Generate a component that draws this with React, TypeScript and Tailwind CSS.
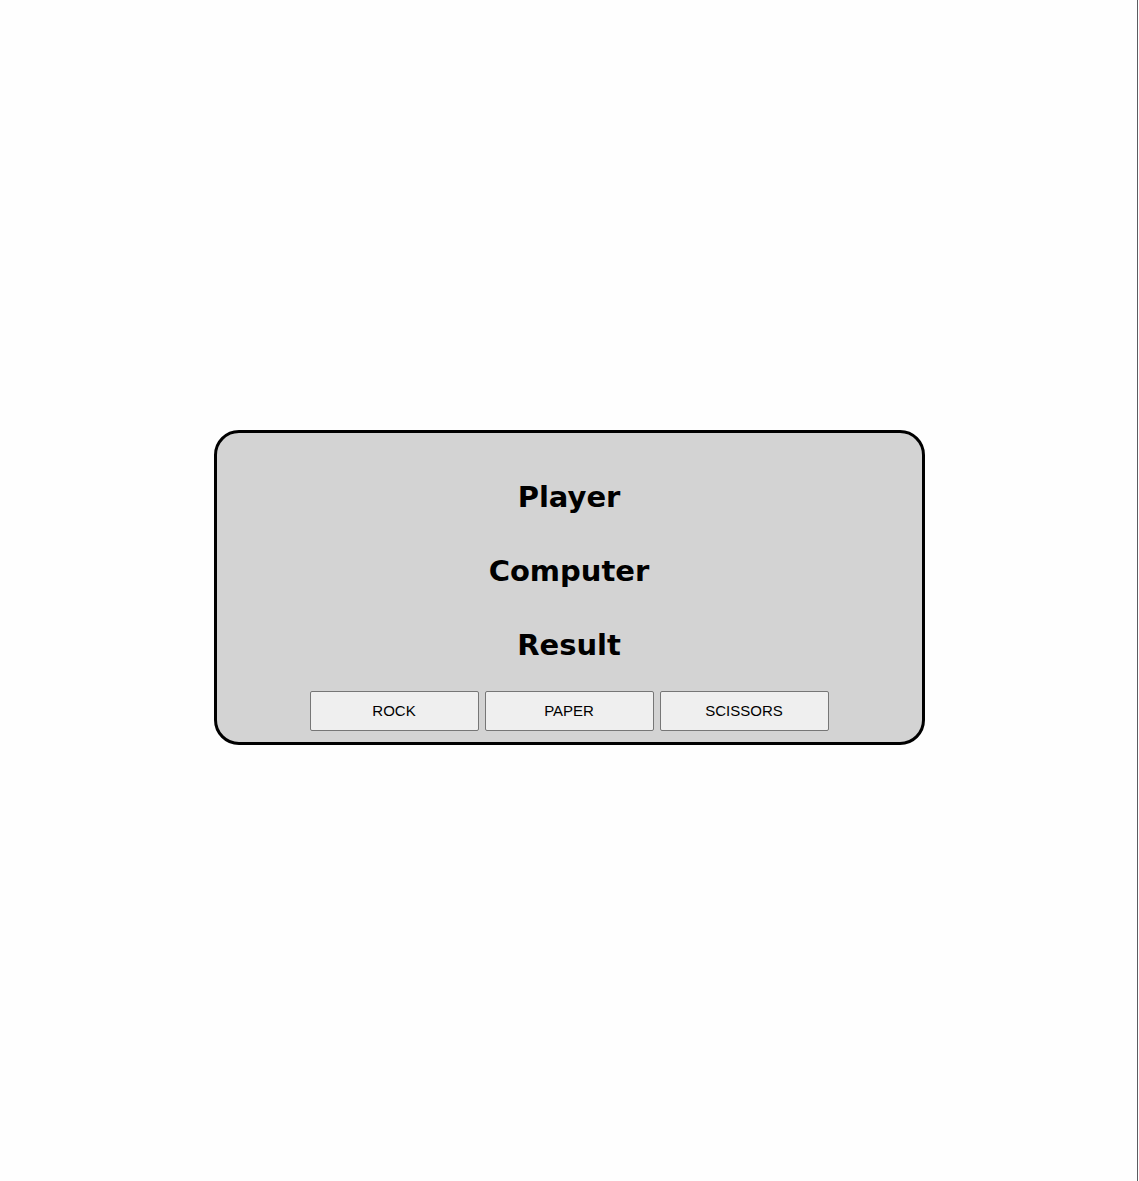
import React from 'react';

const App: React.FC = () => {
  const choices = ['ROCK', 'PAPER', 'SCISSORS'];

  return (
    <div className="flex h-[1181px] w-full bg-[#fefefe]">
      <div className="flex flex-1 items-center justify-center pb-[6px] pl-px">
        <div className="w-[711px] rounded-[25px] border-[3px] border-black bg-[#d3d3d3] pt-[27px] pb-[11px]">
          {['Player', 'Computer', 'Result'].map((label) => (
            <h1
              key={label}
              className="h-[74px] text-center text-[29px] font-bold leading-[74px] text-black"
              style={{ fontFamily: '"Comic Sans MS", "DejaVu Sans", sans-serif' }}
            >
              {label}
            </h1>
          ))}
          <div className="mt-[9px] flex justify-center gap-[6px]">
            {choices.map((c) => (
              <button
                key={c}
                className="h-[40px] w-[169px] rounded-[2px] border border-[#767676] bg-[#efefef] text-[15px] text-black"
                style={{ fontFamily: '"Liberation Sans", Arial, sans-serif' }}
              >
                {c}
              </button>
            ))}
          </div>
        </div>
      </div>
      <div className="w-px bg-[#5c5c60]" />
      <div className="w-px bg-white" />
    </div>
  );
};

export default App;
